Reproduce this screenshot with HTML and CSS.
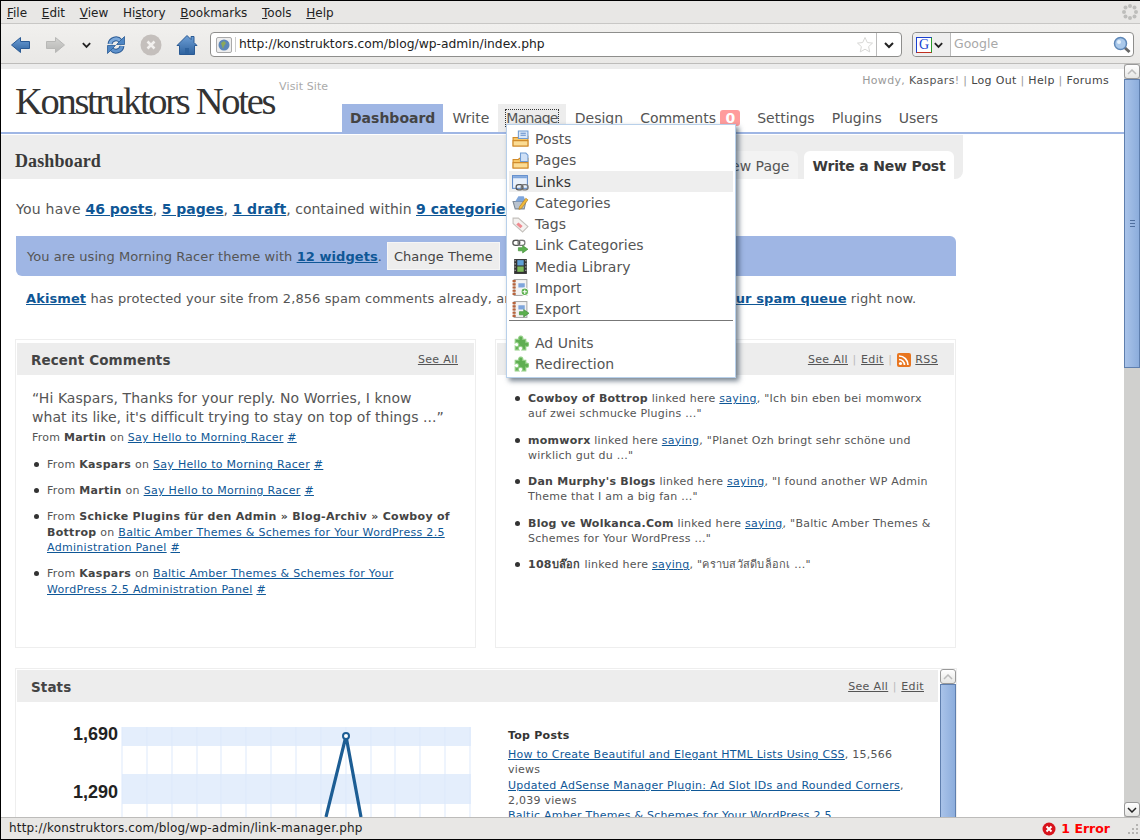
FILE: index.html
```html
<!DOCTYPE html>
<html lang="en">
  <head>
    <meta charset="UTF-8">
    <title>Konstruktors Notes - Dashboard</title>
    <link rel="stylesheet" href="styles.css">
  </head>
  <body>
    <svg class="defs" width="0" height="0">
      <defs>
        <linearGradient id="blue-v" x1="0" y1="0" x2="0" y2="1">
          <stop offset="0" stop-color="#6e9fd6"/>
          <stop offset="1" stop-color="#2f639f"/>
        </linearGradient>
        <linearGradient id="grey-v" x1="0" y1="0" x2="0" y2="1">
          <stop offset="0" stop-color="#d4d4d2"/>
          <stop offset="1" stop-color="#b6b6b4"/>
        </linearGradient>
      </defs>
      <symbol id="folder" viewBox="0 0 16 16">
        <path d="M1 7h5l1-1h8v9H1z" fill="#f6c666" stroke="#d08a2a"/>
        <path d="M1 10h14v5H1z" fill="#fbdc94" stroke="#d08a2a"/>
      </symbol>
      <symbol id="plugin" viewBox="0 0 16 16">
        <path d="M3 4h3.500a2 2 0 1 1 3.500 0H13v3a2 2 0 1 1 0 3.500V14H9.500a2 2 0 1 0-3 0H3v-3.500a2 2 0 1 0 0-3z" fill="#5fae52" stroke="#93cf86"/>
      </symbol>
      <symbol id="chain" viewBox="0 0 16 8">
        <rect x="1" y="1" width="8" height="6" rx="3" fill="none" stroke="#555" stroke-width="1.500"/>
        <rect x="7" y="1" width="8" height="6" rx="3" fill="none" stroke="#777" stroke-width="1.500"/>
      </symbol>
      <symbol id="notebook" viewBox="0 0 16 16">
        <rect x="2" y="0.500" width="12" height="15" fill="#f3f3f3" stroke="#aaa"/>
        <path d="M2 1v14" stroke="#b8643c" stroke-width="3" stroke-dasharray="2 1"/>
        <path d="M6 4h6v4H6z" fill="#7fa6dc"/>
      </symbol>
    </svg>

    <div class="window">
      <nav class="menubar">
        <span><u>F</u>ile</span>
        <span><u>E</u>dit</span>
        <span><u>V</u>iew</span>
        <span>Hi<u>s</u>tory</span>
        <span><u>B</u>ookmarks</span>
        <span><u>T</u>ools</span>
        <span><u>H</u>elp</span>
        <svg class="throbber" width="18" height="18" viewBox="0 0 18 18" fill="#bdbdbb">
          <circle cx="9" cy="3" r="2"/><circle cx="13.500" cy="4.500" r="2"/><circle cx="15" cy="9" r="2"/><circle cx="13.500" cy="13.500" r="2"/>
          <circle cx="9" cy="15" r="2"/><circle cx="4.500" cy="13.500" r="2"/><circle cx="3" cy="9" r="2"/><circle cx="4.500" cy="4.500" r="2"/>
        </svg>
      </nav>

      <header class="toolbar">
        <svg class="tb-icon back" width="19" height="20" viewBox="0 0 19 20"><path d="M.5 10 9.500 2.500V6.500h9v7h-9v4z" fill="url(#blue-v)" stroke="#2a5a94"/></svg>
        <svg class="tb-icon forward" width="19" height="20" viewBox="0 0 19 20"><path d="M18.500 10 9.500 2.500V6.500h-9v7h9v4z" fill="url(#grey-v)" stroke="#b8b8b6"/></svg>
        <svg class="tb-icon chevron" width="11" height="8" viewBox="0 0 12 8"><path d="M2 2l4 4 4-4" fill="none" stroke="#222" stroke-width="2"/></svg>
        <svg class="tb-icon reload" width="20" height="20" viewBox="0 0 20 20">
          <path d="M4 9a6 6 0 0 1 10.500-3" fill="none" stroke="#2a5a94" stroke-width="5"/>
          <path d="M4 9a6 6 0 0 1 10.500-3" fill="none" stroke="#7ba8da" stroke-width="3"/>
          <path d="M18.500 1.500v8h-8z" fill="#4f86c4" stroke="#2a5a94" stroke-width=".8"/>
          <path d="M16 11a6 6 0 0 1-10.500 3" fill="none" stroke="#2a5a94" stroke-width="5"/>
          <path d="M16 11a6 6 0 0 1-10.500 3" fill="none" stroke="#5f92cc" stroke-width="3"/>
          <path d="M1.500 18.500v-8h8z" fill="#4f86c4" stroke="#2a5a94" stroke-width=".8"/>
        </svg>
        <svg class="tb-icon stop" width="22" height="22" viewBox="0 0 22 22"><circle cx="11" cy="11" r="10.500" fill="#c4bfbc"/><path d="M7.500 7.500l7 7m0-7-7 7" stroke="#f2f0ee" stroke-width="2.500"/></svg>
        <svg class="tb-icon home" width="22" height="22" viewBox="0 0 22 22"><path d="M1 11.500 11 1.500l4 4V2.500h3v6l3 3h-2.500v9h-15v-9z" fill="url(#blue-v)" stroke="#2a5a94"/><path d="M9 14h4v6H9z" fill="#2f639f"/></svg>

        <div class="urlbar">
          <span class="favicon"><svg width="12" height="12" viewBox="0 0 12 12"><circle cx="6" cy="6" r="5.500" fill="#5c86b8"/><path d="M3 4l3-2 2 2-2 3-1 3-1-3z" fill="#8aa85a"/></svg></span>
          <span class="url-text">http://konstruktors.com/blog/wp-admin/index.php</span>
          <svg class="star" width="18" height="18" viewBox="0 0 18 18"><path d="M9 1.500l2.300 5 5.200.6-3.900 3.500 1.100 5.300L9 13.200l-4.700 2.700 1.100-5.300L1.500 7.100l5.200-.6z" fill="#fff" stroke="#d8d8d6"/></svg>
          <span class="url-drop"><svg width="12" height="8" viewBox="0 0 12 8"><path d="M2 2l4 4 4-4" fill="none" stroke="#222" stroke-width="2"/></svg></span>
        </div>

        <div class="searchbar">
          <span class="engine">
            <span class="g-logo">G</span>
            <svg width="11" height="8" viewBox="0 0 12 8"><path d="M2 2l4 4 4-4" fill="none" stroke="#222" stroke-width="2"/></svg>
          </span>
          <span class="search-text">Google</span>
          <svg class="loupe" width="18" height="18" viewBox="0 0 18 18"><path d="M11 11l5.500 5" stroke="#666" stroke-width="3"/><circle cx="7.500" cy="7.500" r="6" fill="#a9c8ea" stroke="#5f88b8" stroke-width="1.500"/><circle cx="6" cy="6" r="2" fill="#e4f0fb"/></svg>
        </div>
      </header>

      <main class="viewport">
        <div class="page">
          <div class="head">
            <div class="brand">
              <h1>Konstruktors Notes</h1>
              <a class="visit">Visit Site</a>
            </div>
            <div class="head-right">
              <p class="user-info">Howdy, <b>Kaspars</b>! <i>|</i> <a>Log Out</a> <i>|</i> <a>Help</a> <i>|</i> <a>Forums</a></p>
              <ul class="main-nav">
                <li class="current">Dashboard</li>
                <li>Write</li>
                <li class="open"><span>Manage</span></li>
                <li>Design</li>
                <li>Comments <em class="count">0</em></li>
                <li>Settings</li>
                <li>Plugins</li>
                <li>Users</li>
              </ul>
            </div>
          </div>

          <div class="sub-head">
            <h2>Dashboard</h2>
            <div class="tabs">
              <a class="tab">Write a New Page</a>
              <a class="tab active">Write a New Post</a>
            </div>
          </div>

          <div class="content">
            <p class="summary"><span class="lead">You have</span> <a>46 posts</a>, <a>5 pages</a>, <a>1 draft</a>, contained within <a>9 categories</a> and <a>48 tags</a>.</p>
            <div class="theme-note"><span>You are using Morning Racer theme with <a>12 widgets</a>.</span> <button class="btn">Change Theme</button></div>
            <p class="akismet"><a>Akismet</a> has protected your site from 2,856 spam comments already, and there are 2 comments left in <a>your spam queue</a> right now.</p>

            <div class="widget-row">
              <section class="widget">
                <div class="widget-head">
                  <h3>Recent Comments</h3>
                  <div class="widget-links"><a>See All</a></div>
                </div>
                <div class="widget-body">
                  <blockquote>“Hi Kaspars, Thanks for your reply. No Worries, I know what its like, it's difficult trying to stay on top of things ...”</blockquote>
                  <p class="first-comment">From <b>Martin</b> on <a>Say Hello to Morning Racer</a> <a>#</a></p>
                  <ul class="comments">
                    <li>From <b>Kaspars</b> on <a>Say Hello to Morning Racer</a> <a>#</a></li>
                    <li>From <b>Martin</b> on <a>Say Hello to Morning Racer</a> <a>#</a></li>
                    <li>From <b>Schicke Plugins für den Admin » Blog-Archiv » Cowboy of Bottrop</b> on <a>Baltic Amber Themes &amp; Schemes for Your WordPress 2.5 Administration Panel</a> <a>#</a></li>
                    <li>From <b>Kaspars</b> on <a>Baltic Amber Themes &amp; Schemes for Your WordPress 2.5 Administration Panel</a> <a>#</a></li>
                  </ul>
                </div>
              </section>

              <section class="widget">
                <div class="widget-head">
                  <h3>Incoming Links</h3>
                  <div class="widget-links">
                    <a>See All</a> <i>|</i> <a>Edit</a> <i>|</i>
                    <svg class="rss" width="14" height="14" viewBox="0 0 14 14"><rect width="14" height="14" rx="2" fill="#e8751f"/><circle cx="3.500" cy="10.500" r="1.600" fill="#fff"/><path d="M2 6.500a5.500 5.500 0 0 1 5.500 5.500M2 3a9 9 0 0 1 9 9" fill="none" stroke="#fff" stroke-width="1.700"/></svg>
                    <a>RSS</a>
                  </div>
                </div>
                <div class="widget-body">
                  <ul class="incoming">
                    <li><b>Cowboy of Bottrop</b> linked here <a>saying</a>, "Ich bin eben bei momworx auf zwei schmucke Plugins ..."</li>
                    <li><b>momworx</b> linked here <a>saying</a>, "Planet Ozh bringt sehr schöne und wirklich gut du ..."</li>
                    <li><b>Dan Murphy's Blogs</b> linked here <a>saying</a>, "I found another WP Admin Theme that I am a big fan ..."</li>
                    <li><b>Blog ve Wolkanca.Com</b> linked here <a>saying</a>, "Baltic Amber Themes &amp; Schemes for Your WordPress ..."</li>
                    <li><b>108บล๊อก</b> linked here <a>saying</a>, "คราบสวัสดีบล็อกเ ..."</li>
                  </ul>
                </div>
              </section>
            </div>

            <section class="widget stats">
              <div class="stats-main">
                <div class="widget-head">
                  <h3>Stats</h3>
                  <div class="widget-links"><a>See All</a> <i>|</i> <a>Edit</a></div>
                </div>
                <div class="stats-body">
                  <svg class="chart" width="472" height="140" viewBox="0 0 472 140">
                    <rect x="106" y="12" width="349" height="19" fill="#e4eefc"/>
                    <rect x="106" y="59" width="349" height="30" fill="#e4eefc"/>
                    <path d="M106 12v130M131 12v130M156 12v130M181 12v130M205 12v130M230 12v130M255 12v130M280 12v130M305 12v130M330 12v130M355 12v130M379 12v130M404 12v130M429 12v130M454 12v130" stroke="#dde9fb" fill="none"/>
                    <text class="axis" x="102" y="25" text-anchor="end">1,690</text>
                    <text class="axis" x="102" y="83" text-anchor="end">1,290</text>
                    <path d="M310 102 330 21 345 102" fill="none" stroke="#1c5d94" stroke-width="3.200"/>
                    <circle cx="330" cy="21" r="3" fill="#fff" stroke="#1c5d94" stroke-width="2"/>
                  </svg>
                  <div class="top-posts">
                    <h4>Top Posts</h4>
                    <p><a>How to Create Beautiful and Elegant HTML Lists Using CSS</a>, 15,566 views</p>
                    <p><a>Updated AdSense Manager Plugin: Ad Slot IDs and Rounded Corners</a>, 2,039 views</p>
                    <p><a>Baltic Amber Themes &amp; Schemes for Your WordPress 2.5</a></p>
                  </div>
                </div>
              </div>
              <div class="scrollbar small">
                <span class="sb-btn"><svg width="10" height="6" viewBox="0 0 10 6"><path d="M1 5l4-4 4 4" fill="none" stroke="#bbb" stroke-width="1.500"/></svg></span>
                <span class="sb-thumb"></span>
              </div>
            </section>
          </div>

          <ul class="dropdown">
            <li><svg width="17" height="17" viewBox="0 0 16 16"><use href="#folder"/><path d="M6 1h9v7H6z" fill="#dbe8f8" stroke="#6f9bd2"/><path d="M8 3h5M8 5h5" stroke="#5f8ccb"/></svg>Posts</li>
            <li><svg width="17" height="17" viewBox="0 0 16 16"><use href="#folder"/><path d="M8 1h5l2 2v6H8z" fill="#cfe0f6" stroke="#6f9bd2"/></svg>Pages</li>
            <li class="hover"><svg width="17" height="17" viewBox="0 0 16 16"><rect x=".500" y="1.500" width="14" height="12" fill="#eaf1fb" stroke="#5f8ccb"/><path d="M1 2h13v2H1z" fill="#7fa6dc"/><use href="#chain" x="3" y="9" width="13" height="7"/></svg>Links</li>
            <li><svg width="17" height="17" viewBox="0 0 16 16"><path d="M1 7h12l-1.500 7H3z" fill="#b9c3cf" stroke="#7f8a96"/><path d="M3 7l3-5h5l2 5" fill="#7fa6dc"/><path d="M7 12l6-8 2 1.500-6 8-2.500 1z" fill="#f0b93c" stroke="#b07d1c" stroke-width=".6"/></svg>Categories</li>
            <li><svg width="17" height="17" viewBox="0 0 16 16"><path d="M1 2h5l9 8-5 5-9-8z" fill="#f4f2f0" stroke="#c4c0bc"/><path d="M6 6l4 3.500-2 2L4 8z" fill="#f08a90"/></svg>Tags</li>
            <li><svg width="17" height="17" viewBox="0 0 16 16"><use href="#chain" x="0" y="2" width="13" height="7"/><path d="M6 10h4V8l5 3.500-5 3.500v-2H6z" fill="#5cb04e" stroke="#3c8a32" stroke-width=".6"/></svg>Link Categories</li>
            <li><svg width="17" height="17" viewBox="0 0 16 16"><rect x="2" y="1" width="12" height="14" fill="#333"/><path d="M5 2h6v5H5z" fill="#5fa0d8"/><path d="M5 8h6v5H5z" fill="#7dbb5a"/><path d="M3 2v12M13 2v12" stroke="#ddd" stroke-dasharray="1 2"/></svg>Media Library</li>
            <li><svg width="17" height="17" viewBox="0 0 16 16"><use href="#notebook"/><circle cx="12" cy="12" r="3.500" fill="#5cb04e" stroke="#fff"/><path d="M10 12h4M12 10v4" stroke="#fff"/></svg>Import</li>
            <li class="sep"><svg width="17" height="17" viewBox="0 0 16 16"><use href="#notebook"/><path d="M7 10h4V8l5 3.500-5 3.500v-2H7z" fill="#5cb04e" stroke="#3c8a32" stroke-width=".6"/></svg>Export</li>
            <li class="after-sep"><svg width="17" height="17" viewBox="0 0 16 16"><use href="#plugin"/></svg>Ad Units</li>
            <li><svg width="17" height="17" viewBox="0 0 16 16"><use href="#plugin"/></svg>Redirection</li>
          </ul>
        </div>

        <div class="scrollbar">
          <span class="sb-btn"><svg width="10" height="6" viewBox="0 0 10 6"><path d="M1 5l4-4 4 4" fill="none" stroke="#bbb" stroke-width="1.500"/></svg></span>
          <span class="sb-thumb"><span class="grip"></span></span>
          <span class="sb-track"></span>
          <span class="sb-btn"><svg width="10" height="6" viewBox="0 0 10 6"><path d="M1 1l4 4 4-4" fill="none" stroke="#222" stroke-width="1.500"/></svg></span>
        </div>
      </main>

      <footer class="statusbar">
        <span class="status-url">http://konstruktors.com/blog/wp-admin/link-manager.php</span>
        <span class="status-error">
          <svg width="14" height="14" viewBox="0 0 14 14"><circle cx="7" cy="7" r="6.500" fill="#d8141c"/><path d="M4.500 4.500l5 5m0-5-5 5" stroke="#fff" stroke-width="2"/></svg>
          1 Error
        </span>
        <svg class="resize" width="12" height="12" viewBox="0 0 12 12" fill="#b5b4b2">
          <path d="M9 1h2v2H9zM5 5h2v2H5zM9 5h2v2H9zM1 9h2v2H1zM5 9h2v2H5zM9 9h2v2H9z"/>
        </svg>
      </footer>
    </div>
  </body>
</html>
```

FILE: styles.css
```css
:root {
  --clr-chrome: #e8e7e5;
  --clr-band: #ededed;
  --clr-blue: #9fb6e4;
  --clr-text: #555;
  --clr-link: #0f5796;
}

html, body {
  margin: 0;
  padding: 0;
  overflow: hidden;
}

*, *::before, *::after {
  box-sizing: border-box;
}

body {
  width: 1140px;
  height: 840px;
  color: var(--clr-text);
  font: normal 14px/1.3 "DejaVu Sans", sans-serif;
}

.defs {
  position: absolute;
}

.window {
  display: flex;
  flex-direction: column;
  width: 1140px;
  height: 840px;
  border-top: 1px solid #000;
  border-bottom: 1px solid #000;
  border-left: 1px solid #000;
  background: #fff;
}

/* Browser chrome
 *
 */

.menubar {
  display: flex;
  align-items: center;
  gap: 14.700px;
  height: 23px;
  padding: 4px 0 0 6px;
  color: #222;
  background: var(--clr-chrome);
  border-bottom: 1px solid #c8c7c5;
  font-size: 12px;
}

.throbber {
  margin-left: auto;
  margin-right: 1px;
  margin-top: -5px;
}

.toolbar {
  display: flex;
  align-items: center;
  height: 40px;
  padding: 2px 0 0 10px;
  background: linear-gradient(#f1f0ee, #e9e8e6);
  border-bottom: 1px solid #bdbcba;
}

.tb-icon {
  flex: none;
}
.forward { margin-left: 16px }
.chevron { margin-left: 16px }
.reload { margin-left: 14px }
.stop { margin-left: 14px }
.home { margin-left: 14px }

.urlbar, .searchbar {
  display: flex;
  align-items: center;
  height: 25px;
  background: #fff;
  border: 1px solid #8e8e8c;
  border-radius: 4px;
}

.urlbar {
  width: 692px;
  margin-left: 12px;
}

.favicon {
  display: flex;
  align-items: center;
  justify-content: center;
  width: 16px;
  height: 16px;
  margin-left: 5px;
  border: 1px solid #aaa;
  border-radius: 2px;
  background: #eee;
}

.url-text {
  margin-left: 3px;
  padding-left: 3px;
  color: #222;
  font-size: 12.300px;
  border-left: 1px solid #ccc;
}

.star {
  margin-left: auto;
}

.url-drop {
  display: flex;
  align-items: center;
  justify-content: center;
  width: 25px;
  height: 100%;
  margin-left: 2px;
  border-left: 1px solid #bbb;
}

.searchbar {
  width: 222px;
  margin-left: 10px;
}

.engine {
  display: flex;
  align-items: center;
  gap: 1px;
  width: 38px;
  height: 100%;
  padding-left: 3px;
  border-right: 1px solid #bbb;
  background: #eee;
  border-radius: 4px 0 0 4px;
}

.g-logo {
  width: 16px;
  height: 16px;
  color: #1a3fd0;
  background: #fff;
  border: 1px solid;
  border-color: #1a3fd0 #2a9a2a #c03020 #1a3fd0;
  font: 14px/14px "Liberation Serif", serif;
  text-align: center;
}

.search-text {
  margin-left: 3px;
  color: #a8a8a8;
  font-size: 12.500px;
}

.loupe {
  margin-left: auto;
  margin-right: 2px;
}

.statusbar {
  display: flex;
  align-items: center;
  height: 22px;
  padding: 1px 1px 0 8px;
  color: #222;
  background: var(--clr-chrome);
  border-top: 1px solid #bdbcba;
  font-size: 12px;
}

.status-url {
  letter-spacing: .180px;
}

.status-error {
  display: flex;
  align-items: center;
  gap: 5px;
  margin-left: auto;
  margin-right: 17px;
  color: #f00;
  font-weight: bold;
  font-size: 12.500px;
}

/* Scrollbars
 *
 */

.viewport {
  flex: 1;
  display: flex;
  min-height: 0;
  background: #fff;
}

.scrollbar {
  flex: none;
  display: flex;
  flex-direction: column;
  width: 16px;
  background: #d0d0ce;
}

.sb-btn {
  flex: none;
  display: flex;
  align-items: center;
  justify-content: center;
  height: 15px;
  background: linear-gradient(#fff, #e6e6e4);
  border: 1px solid #999;
  border-radius: 3px;
}

.sb-thumb {
  flex: none;
  display: flex;
  align-items: center;
  justify-content: center;
  height: 289px;
  background: linear-gradient(to right, #a9c3e9, #8caddc);
  border: 1px solid #5f7fae;
}

.grip {
  width: 5px;
  height: 7px;
  border-top: 1px solid #4f6f9e;
  border-bottom: 1px solid #4f6f9e;
  background: linear-gradient(#4f6f9e, #4f6f9e) center / 100% 1px no-repeat;
}

.sb-track {
  flex: 1;
}

/* Page
 *
 */

.page {
  position: relative;
  flex: 1;
  min-width: 0;
  overflow: hidden;
  padding-top: 5px;
  background: linear-gradient(#ececec 5px, #fff 5px);
}

.head {
  display: flex;
  height: 65px;
  border-bottom: 2px solid var(--clr-blue);
}

.brand {
  flex: none;
  display: flex;
  align-items: flex-start;
  width: 341px;
  padding: 10px 0 0 14px;
}

h1 {
  margin: 0;
  color: #333;
  font: normal 38.500px/44px "Liberation Serif", serif;
  letter-spacing: -2.300px;
  white-space: nowrap;
}

.visit {
  margin: 1px 0 0 5px;
  color: #aaa;
  font-size: 11px;
  letter-spacing: .1px;
  white-space: nowrap;
}

.head-right {
  flex: 1;
  display: flex;
  flex-direction: column;
  justify-content: space-between;
}

.user-info {
  margin: 0;
  padding: 5px 15px 0 0;
  color: #999;
  font-size: 11px;
  letter-spacing: .33px;
  text-align: right;
}
.user-info b { color: #555; font-weight: normal }
.user-info a { color: #444 }
.user-info i { font-style: normal }

.main-nav {
  display: flex;
  align-items: stretch;
  gap: 1px;
  height: 28px;
  margin: 0;
  padding: 0;
  list-style: none;
}

.main-nav li {
  padding: 5px 8px 0;
  white-space: nowrap;
}

.main-nav .current {
  color: #444;
  font-weight: bold;
  background: var(--clr-blue);
}

.main-nav .open {
  background: var(--clr-band);
}
.main-nav .open span {
  letter-spacing: -.7px;
  outline: 1px dotted #333;
}

.count {
  padding: 0 5px;
  color: #fff;
  background: #ff9c9c;
  border-radius: 3px;
  font-style: normal;
  font-weight: bold;
}

.sub-head {
  display: flex;
  justify-content: space-between;
  align-items: flex-end;
  height: 44px;
  margin-top: 1px;
  margin-right: 161px;
  padding: 0 9px 0 14px;
  background: var(--clr-band);
  border-radius: 0 0 8px 0;
}

h2 {
  margin: 0;
  align-self: flex-end;
  padding-bottom: 9px;
  color: #3a3a3a;
  font: bold 18px/1 "Liberation Serif", serif;
  letter-spacing: .1px;
}

.tabs {
  display: flex;
  gap: 6px;
}

.tab {
  height: 28px;
  padding: 6px 8.500px 0;
  border-radius: 6px 6px 0 0;
  background: #f3f3f3;
}

.tab.active {
  color: #3a3a3a;
  background: #fff;
  font-weight: bold;
  letter-spacing: -.2px;
}

.content {
  width: 940px;
  margin-left: 15px;
}

.content a, .top-posts a {
  color: var(--clr-link);
  text-decoration: underline;
}

.summary {
  margin: 21px 0 0;
  line-height: 18px;
}
.summary .lead {
  letter-spacing: .25px;
}
.summary a, .theme-note a, .akismet a {
  font-weight: bold;
}

.theme-note {
  display: flex;
  align-items: center;
  height: 40px;
  margin-top: 18px;
  padding-left: 11px;
  background: var(--clr-blue);
  border-radius: 0 6px 0 6px;
  font-size: 13px;
  letter-spacing: .07px;
}
.theme-note span {
  padding-top: 2px;
}

.btn {
  height: 28px;
  margin-left: 5px;
  padding: 2px 6px 0;
  color: #444;
  background: var(--clr-band);
  border: 1px solid #f6f6f6;
  font: inherit;
}

.akismet {
  margin: 14px 0 0;
  padding-left: 10px;
  font-size: 13px;
  letter-spacing: .1px;
  line-height: 17px;
}

.widget-row {
  display: flex;
  gap: 19px;
  width: 941px;
  margin: 32px 0 0 -1px;
}

.widget {
  flex: 1;
  height: 309px;
  padding: 3px 1px 0;
  border: 1px solid #eee;
}

.widget-head {
  display: flex;
  justify-content: space-between;
  align-items: center;
  height: 32px;
  padding: 0 16px 0 14px;
  background: var(--clr-band);
}

h3 {
  margin: 0;
  padding-top: 4px;
  color: #444;
  font-size: 13.500px;
  font-weight: bold;
  letter-spacing: .1px;
}

.widget-links {
  display: flex;
  align-items: center;
  gap: 4.500px;
  padding-top: 3px;
  font-size: 11px;
  letter-spacing: .35px;
}
.widget-links a { color: #555 }
.widget-links i { color: #bbb; font-style: normal }

.widget-body {
  padding: 14px 19px 0 15px;
  font-size: 11px;
  letter-spacing: .25px;
  line-height: 15px;
}

blockquote {
  margin: 0;
  padding-right: 10px;
  font-size: 14px;
  letter-spacing: .05px;
  line-height: 19px;
}

.first-comment {
  margin: 3px 0 0;
}

.widget-body ul {
  margin: 0;
  padding: 0 0 0 15px;
  list-style: none;
}

.widget-body li::before {
  float: left;
  width: 5px;
  height: 5px;
  margin: 5px 0 0 -13px;
  background: #333;
  border-radius: 50%;
  content: '';
}

.widget-body .comments {
  padding-top: 12px;
  letter-spacing: .3px;
  line-height: 15.500px;
}
.widget-body .incoming {
  padding: 2px 0 0 16px;
}
.comments li { margin-bottom: 10.500px }
.incoming li { margin-bottom: 11.600px }
.widget-body b { color: #444 }

.stats {
  flex: none;
  display: flex;
  width: 942px;
  height: 200px;
  margin: 20px 0 0 -1px;
  padding: 0;
  overflow: hidden;
}

.stats-main {
  flex: 1;
  min-width: 0;
  padding: 1px 2px 0 1px;
}

.stats-main .widget-head {
  padding-right: 14px;
}

.stats-body {
  display: flex;
  padding-top: 13px;
}

.chart {
  flex: none;
  margin-left: -1px;
}

.axis {
  fill: #222;
  font: bold 18px "Liberation Sans", sans-serif;
}

.top-posts {
  width: 400px;
  margin-left: 20px;
  padding-top: 13px;
  font-size: 11px;
  letter-spacing: .25px;
  line-height: 15px;
}

h4 {
  margin: 0 0 4px;
  color: #333;
  font-size: 11px;
}

.top-posts p {
  margin: 0 0 .500px;
}

.scrollbar.small {
  width: 16px;
  background: #fff;
}
.scrollbar.small .sb-thumb {
  height: 140px;
}

/* Manage menu
 *
 */

.dropdown {
  position: absolute;
  top: 60px;
  left: 505px;
  width: 230px;
  margin: 0;
  padding: 3.200px 2px 2px;
  list-style: none;
  background: #fff;
  border: 1px solid #b8d0ea;
  box-shadow: 3px 3px 5px rgba(30, 50, 70, .6);
}

.dropdown li {
  display: flex;
  align-items: center;
  gap: 6px;
  height: 21.300px;
  padding-left: 3px;
  white-space: nowrap;
}

.dropdown .hover {
  padding-top: 2px;
  color: #333;
  background: #eee;
}

.dropdown .sep {
  position: relative;
  margin-bottom: 13px;
}
.dropdown .sep::after {
  position: absolute;
  left: 0;
  right: 0;
  bottom: -1px;
  border-bottom: 1px solid #777;
  content: '';
}
.dropdown .after-sep {
  margin-top: 13px;
  margin-bottom: -.500px;
}
```
